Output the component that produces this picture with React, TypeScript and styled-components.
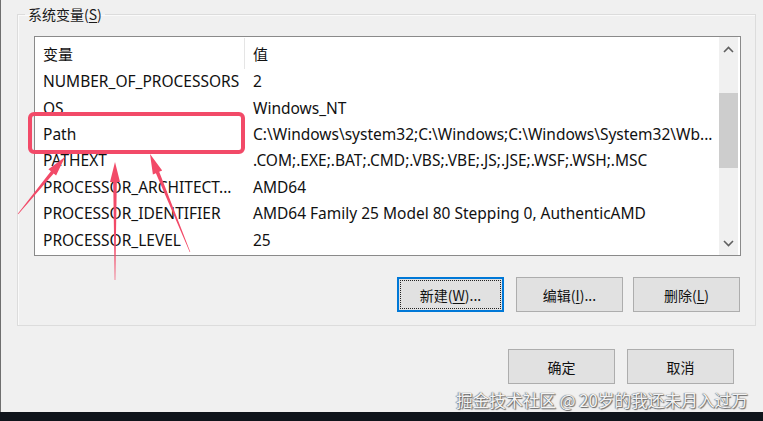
import React from "react";
import styled, { createGlobalStyle, css } from "styled-components";

const Global = createGlobalStyle`
  html, body { margin: 0; padding: 0; background: #0f141b; }
  body { font-family: "Noto Sans", "Noto Sans CJK SC", sans-serif; }
  #root { width: 763px; height: 421px; overflow: hidden; }
`;

const Screen = styled.div`
  position: relative;
  width: 763px;
  height: 421px;
  display: flex;
  flex-direction: column;
  background: #0f141b;
`;

const Dialog = styled.div`
  height: 412px;
  background: #f0f0f0;
  border-left: 1px solid #6f6f6f;
  box-sizing: border-box;
  display: flex;
  flex-direction: column;
  padding: 6px 7px 0 16px;
`;

const Group = styled.fieldset`
  margin: 0;
  height: 320px;
  box-sizing: border-box;
  border: 1px solid #dcdcdc;
  box-shadow: inset 1px 1px 0 #fafafa;
  padding: 0 14px 0 16px;
  display: flex;
  flex-direction: column;
`;

const Legend = styled.legend`
  margin-left: -9px;
  padding: 0 3px;
  font-family: "Noto Sans CJK SC", sans-serif;
  font-size: 14px;
  line-height: 16px;
  color: #1a1a1a;
`;

const ListBox = styled.div`
  margin-top: 14px;
  height: 220px;
  box-sizing: border-box;
  border: 1px solid #8a8a8a;
  background: #fff;
  display: flex;
`;

const Table = styled.div`
  flex: 1;
  display: flex;
  flex-direction: column;
  overflow: hidden;
  padding-top: 1px;
`;

const Row = styled.div<{ $header?: boolean }>`
  display: grid;
  grid-template-columns: 210px 1fr;
  height: ${(p) => (p.$header ? "30px" : "26.4px")};
  align-items: center;
  font-size: 15.5px;
  color: #111;
  white-space: nowrap;
`;

const Cell = styled.div<{ $header?: boolean; $second?: boolean }>`
  padding-left: 8px;
  overflow: hidden;
  height: 100%;
  display: flex;
  align-items: center;
  ${(p) =>
    p.$header &&
    css`
      font-family: "Noto Sans CJK SC", sans-serif;
      font-size: 15px;
      padding-top: 1px;
    `}
  ${(p) =>
    p.$header &&
    !p.$second &&
    css`
      border-right: 1px solid #e5e5e5;
    `}
`;

const ScrollBar = styled.div`
  width: 19px;
  margin-right: 2px;
  background: #f0f0f0;
  display: flex;
  flex-direction: column;
  align-items: center;
  border-left: 1px solid #fff;
`;

const ArrowBtn = styled.div`
  height: 24px;
  width: 100%;
  display: flex;
  align-items: center;
  justify-content: center;
  color: #606060;
`;

const Track = styled.div`
  flex: 1;
  width: 100%;
  padding-top: 32px;
`;

const Thumb = styled.div`
  width: 100%;
  height: 75px;
  background: #cdcdcd;
`;

const ButtonRow = styled.div`
  display: flex;
  justify-content: flex-end;
  gap: 10px;
  margin-top: 21px;
  padding-right: 1px;
`;

const Button = styled.button<{ $focused?: boolean }>`
  width: 107px;
  height: 35px;
  box-sizing: border-box;
  background: #e1e1e1;
  border: 1px solid #adadad;
  font-family: "Noto Sans CJK SC", sans-serif;
  font-size: 14px;
  color: #111;
  padding: 0;
  ${(p) =>
    p.$focused &&
    css`
      margin-right: 2px;
      border: 2px solid #0078d7;
      outline: 1px dotted #222;
      outline-offset: -4px;
    `}
`;

const U = styled.span`
  text-decoration: underline;
  text-underline-offset: 2px;
`;

const Footer = styled.div`
  display: flex;
  justify-content: flex-end;
  gap: 12px;
  margin-top: 23px;
  padding-right: 22px;
`;

const Taskbar = styled.div`
  height: 9px;
  background: #0f141b;
`;

const Overlay = styled.svg`
  position: absolute;
  left: 0;
  top: 0;
  pointer-events: none;
`;

const Watermark = styled.div`
  position: absolute;
  right: 15px;
  top: 389px;
  font-family: "Noto Sans CJK SC", sans-serif;
  font-size: 16.7px;
  line-height: 22px;
  color: #f4f4f4;
  text-shadow: 0 0 1px #555, 1px 1px 1px rgba(0, 0, 0, 0.55), -1px 0 1px rgba(0, 0, 0, 0.3);
`;

const rows: [string, string][] = [
  ["NUMBER_OF_PROCESSORS", "2"],
  ["OS", "Windows_NT"],
  ["Path", "C:\\Windows\\system32;C:\\Windows;C:\\Windows\\System32\\Wb..."],
  ["PATHEXT", ".COM;.EXE;.BAT;.CMD;.VBS;.VBE;.JS;.JSE;.WSF;.WSH;.MSC"],
  ["PROCESSOR_ARCHITECT...", "AMD64"],
  ["PROCESSOR_IDENTIFIER", "AMD64 Family 25 Model 80 Stepping 0, AuthenticAMD"],
  ["PROCESSOR_LEVEL", "25"],
];

function arrowPoints(tx: number, ty: number, hx: number, hy: number) {
  const dx = hx - tx;
  const dy = hy - ty;
  const len = Math.hypot(dx, dy);
  const ux = dx / len;
  const uy = dy / len;
  const nx = -uy;
  const ny = ux;
  const headLen = 20;
  const headW = 5;
  const shaftW = 1.8;
  const tailW = 0.3;
  const bx = hx - ux * headLen;
  const by = hy - uy * headLen;
  const pts = [
    [tx + nx * tailW, ty + ny * tailW],
    [bx + nx * shaftW, by + ny * shaftW],
    [bx + nx * headW, by + ny * headW],
    [hx, hy],
    [bx - nx * headW, by - ny * headW],
    [bx - nx * shaftW, by - ny * shaftW],
    [tx - nx * tailW, ty - ny * tailW],
  ];
  return pts.map((p) => p.map((v) => v.toFixed(1)).join(",")).join(" ");
}

const ChevronUp = () => (
  <svg width="11" height="7" viewBox="0 0 11 7">
    <path d="M1 6 L5.5 1.5 L10 6" fill="none" stroke="#606060" strokeWidth="1.6" />
  </svg>
);
const ChevronDown = () => (
  <svg width="11" height="7" viewBox="0 0 11 7">
    <path d="M1 1 L5.5 5.5 L10 1" fill="none" stroke="#606060" strokeWidth="1.6" />
  </svg>
);

export default function App() {
  const red = "#f24a68";
  return (
    <Screen>
      <Global />
      <Dialog>
        <Group>
          <Legend>
            系统变量(<U>S</U>)
          </Legend>
          <ListBox>
            <Table>
              <Row $header>
                <Cell $header>变量</Cell>
                <Cell $header $second>
                  值
                </Cell>
              </Row>
              {rows.map(([k, v]) => (
                <Row key={k}>
                  <Cell>{k}</Cell>
                  <Cell $second>{v}</Cell>
                </Row>
              ))}
            </Table>
            <ScrollBar>
              <ArrowBtn>
                <ChevronUp />
              </ArrowBtn>
              <Track>
                <Thumb />
              </Track>
              <ArrowBtn>
                <ChevronDown />
              </ArrowBtn>
            </ScrollBar>
          </ListBox>
          <ButtonRow>
            <Button $focused>
              新建(<U>W</U>)...
            </Button>
            <Button>
              编辑(<U>I</U>)...
            </Button>
            <Button>
              删除(<U>L</U>)
            </Button>
          </ButtonRow>
        </Group>
        <Footer>
          <Button>确定</Button>
          <Button>取消</Button>
        </Footer>
      </Dialog>
      <Taskbar />
      <Overlay width="763" height="421" viewBox="0 0 763 421">
        <rect x="30" y="114" width="213" height="38" rx="4" fill="none" stroke={red} strokeWidth="4" />
        <polygon points={arrowPoints(18, 214, 65, 157)} fill={red} />
        <polygon points={arrowPoints(115, 280, 115, 162)} fill={red} />
        <polygon points={arrowPoints(190, 252, 150, 154)} fill={red} />
      </Overlay>
      <Watermark>掘金技术社区 @ 20岁的我还未月入过万</Watermark>
    </Screen>
  );
}
